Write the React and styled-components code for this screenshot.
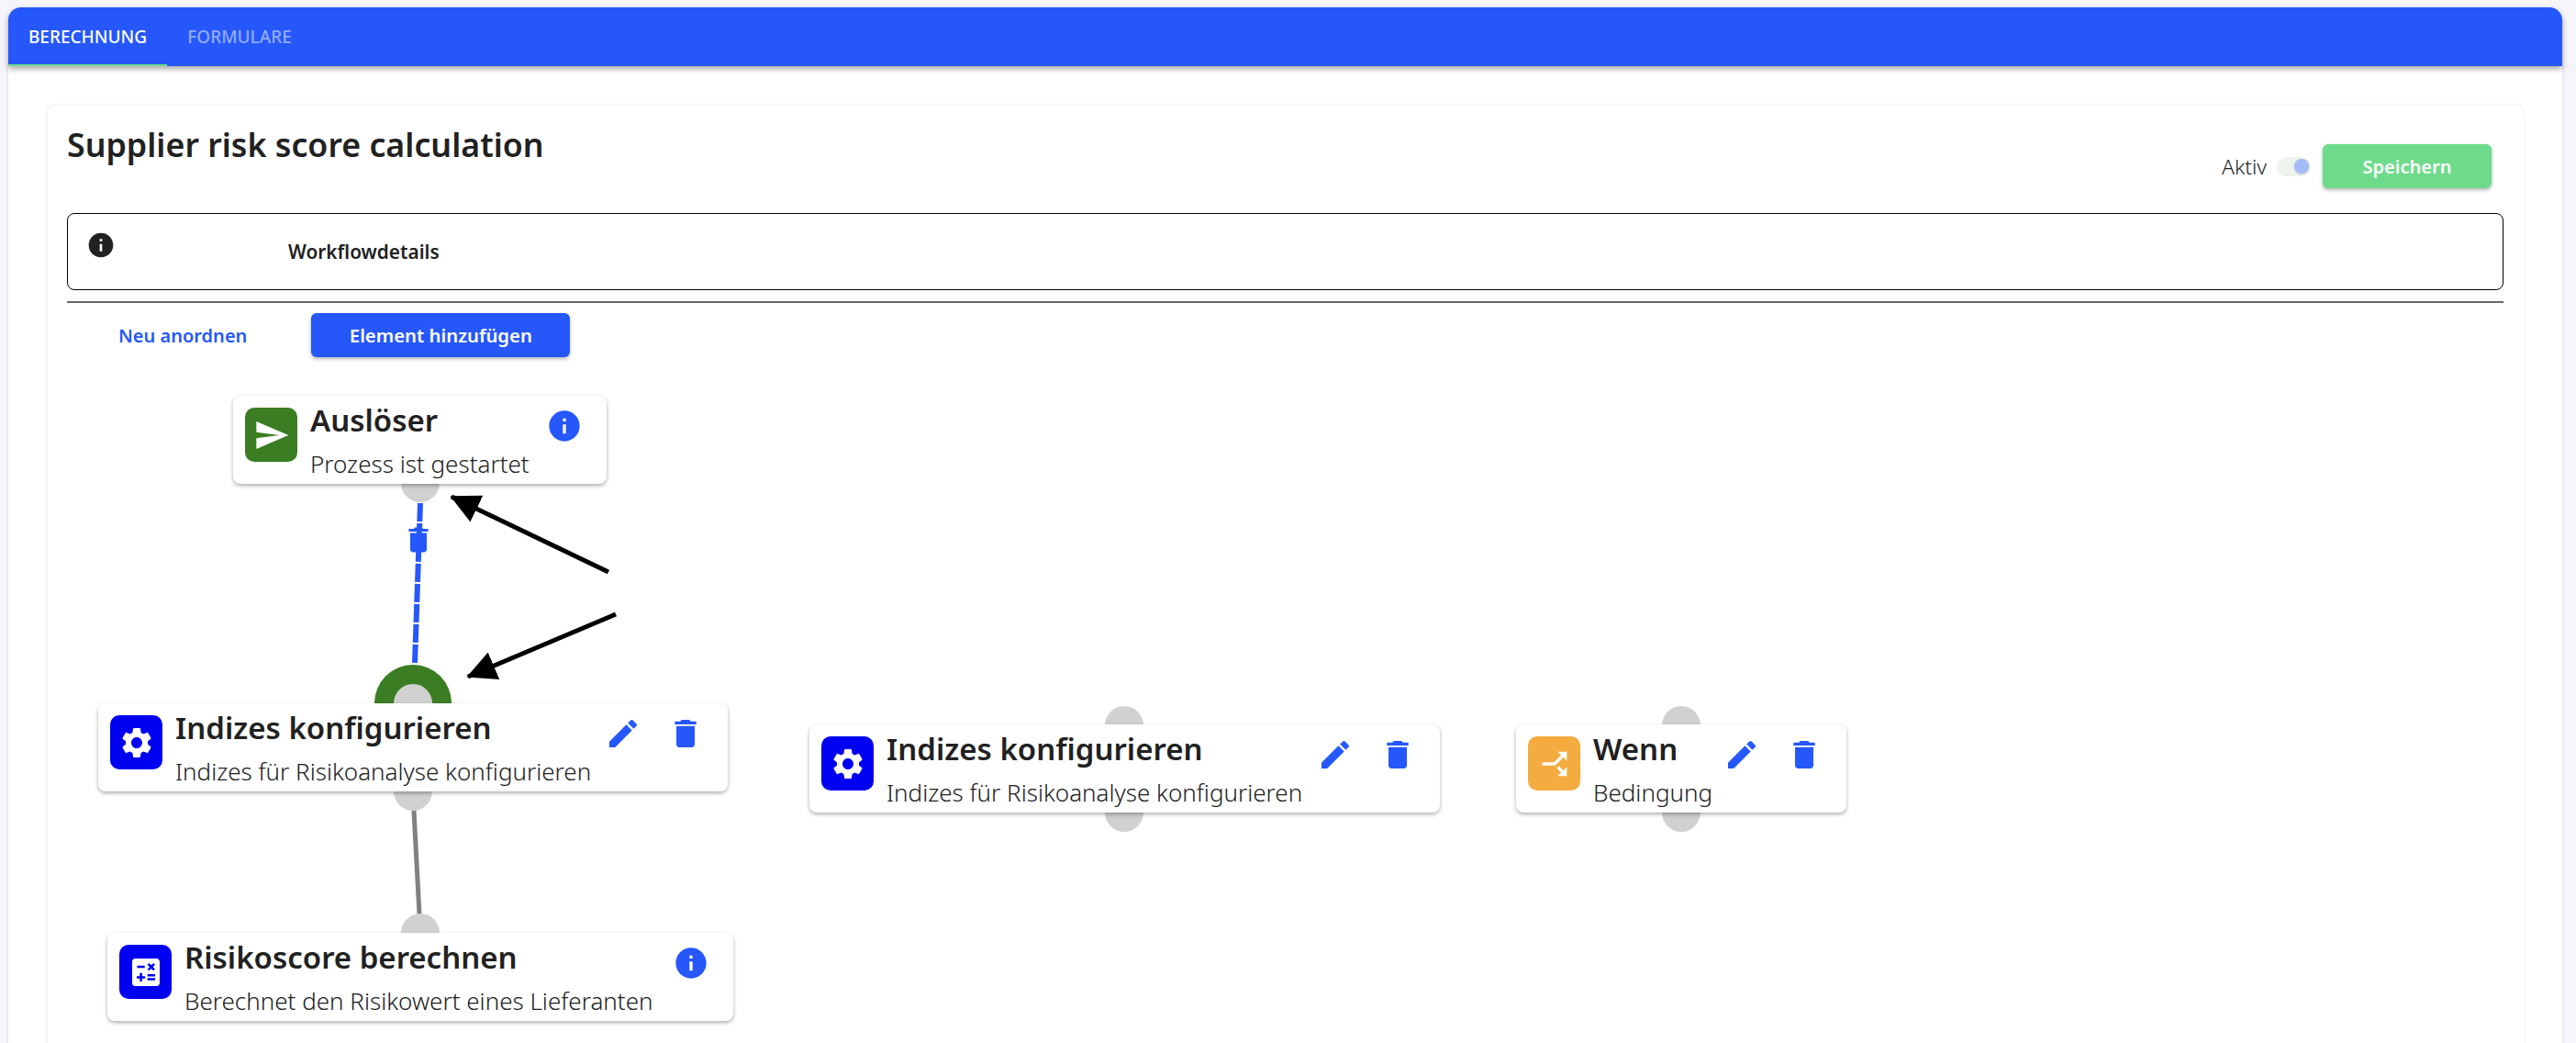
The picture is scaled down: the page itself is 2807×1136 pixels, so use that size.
import React from "react";
import styled, { createGlobalStyle } from "styled-components";

const BLUE = "#2557fa";

const GlobalStyle = createGlobalStyle`
  html, body {
    margin: 0;
    height: 100%;
    overflow: hidden;
    background: #f5f5fb;
    font-family: "Noto Sans", "Open Sans", sans-serif;
    color: #212121;
  }
`;

const Page = styled.div`
  padding: 8px 15px 0 9px;
  height: 1128px;
  display: flex;
  flex-direction: column;
`;

const TabBar = styled.header`
  display: flex;
  height: 64px;
  flex: none;
  background: ${BLUE};
  border-radius: 14px 14px 0 0;
  box-shadow: 0 3px 6px rgba(0, 0, 0, 0.35);
  position: relative;
  z-index: 2;
`;

const Tab = styled.div`
  display: flex;
  align-items: center;
  justify-content: center;
  width: ${(p) => p.$width}px;
  font-size: 19px;
  font-weight: 500;
  color: ${(p) => (p.$active ? "#fff" : "rgba(255, 255, 255, 0.5)")};
  border-bottom: 2px solid ${(p) => (p.$active ? "#6edb8a" : "transparent")};
  padding-top: 2px;
  box-sizing: border-box;
`;

const Sheet = styled.main`
  flex: 1;
  min-height: 0;
  background: #fff;
  box-shadow: 0 0 3px rgba(0, 0, 0, 0.18);
  padding: 43px 42px 0 43px;
  overflow: hidden;
`;

const Card = styled.section`
  height: 1100px;
  padding: 0 22px 0 21px;
  background: #fff;
  border-radius: 8px;
  box-shadow: 0 0 4px rgba(0, 0, 0, 0.1);
`;

const TitleRow = styled.div`
  display: flex;
  justify-content: space-between;
  align-items: flex-start;
  height: 117px;
`;

const Title = styled.h1`
  margin: 18px 0 0;
  font-size: 35.75px;
  line-height: 48px;
  font-weight: 600;
`;

const StatusGroup = styled.div`
  display: flex;
  align-items: center;
  margin: 42px 13px 0 0;
`;

const StatusLabel = styled.span`
  font-size: 22.8px;
  font-weight: 300;
  margin-right: 11px;
`;

const Toggle = styled.div`
  width: 37px;
  height: 21px;
  border-radius: 11px;
  background: #edf5ee;
  margin-right: 13px;
  display: flex;
  align-items: center;
  justify-content: flex-end;
  padding-right: 2px;
  box-sizing: border-box;
`;

const Thumb = styled.div`
  width: 16px;
  height: 16px;
  border-radius: 50%;
  background: #a6bbf9;
  box-shadow: 0 1px 2px rgba(0, 0, 0, 0.2);
`;

const Button = styled.button`
  font: inherit;
  border: 0;
  height: 48px;
  width: ${(p) => p.$width}px;
  border-radius: 6px;
  background: ${(p) => p.$bg};
  color: #fff;
  font-size: ${(p) => p.$size}px;
  font-weight: 600;
  box-shadow: 0 2px 4px rgba(0, 0, 0, 0.3);
`;

const DetailsBox = styled.div`
  display: flex;
  height: 84px;
  box-sizing: border-box;
  border: 1.5px solid #000;
  border-radius: 8px;
  padding: 0 0 0 20px;
`;

const DetailsIcon = styled.svg`
  width: 32px;
  height: 32px;
  margin-top: 18px;
  fill: #212121;
`;

const DetailsLabel = styled.div`
  margin: 1px 0 0 188px;
  line-height: 80px;
  font-size: 20.8px;
  font-weight: 600;
`;

const Divider = styled.hr`
  margin: 12px 0 0;
  border: 0;
  height: 2px;
  background: #666;
`;

const Toolbar = styled.div`
  display: flex;
  align-items: center;
  height: 48px;
  margin-top: 11px;
  padding-left: 56px;
`;

const LinkLabel = styled.span`
  color: ${BLUE};
  font-size: 20px;
  font-weight: 600;
  margin-right: 70px;
`;

const Canvas = styled.div`
  position: relative;
  height: 720px;
  margin-top: 11px;
`;

const Wires = styled.svg`
  position: absolute;
  left: 0;
  top: 0;
  width: 2655px;
  height: 720px;
  z-index: 1;
`;

const Handle = styled.div`
  position: absolute;
  left: ${(p) => p.$x - 21}px;
  top: ${(p) => p.$y - 21}px;
  width: 42px;
  height: 42px;
  border-radius: 50%;
  background: #d1d1d1;
  z-index: 2;
  ${(p) => p.$ring && "box-shadow: 0 0 0 21px #3a7d23;"}
`;

const Node = styled.article`
  position: absolute;
  left: ${(p) => p.$x}px;
  top: ${(p) => p.$y}px;
  width: ${(p) => p.$w}px;
  height: 96px;
  box-sizing: border-box;
  display: flex;
  padding: 13px 26px 0 13px;
  background: #fff;
  border-radius: 8px;
  box-shadow: 0 2px 4px rgba(0, 0, 0, 0.32);
  z-index: 3;
`;

const IconTile = styled.div`
  flex: none;
  width: 57px;
  height: 59px;
  border-radius: 10px;
  background: ${(p) => p.$bg};
  display: flex;
  align-items: center;
  justify-content: center;
  margin-right: 14px;
`;

const TileIcon = styled.svg`
  width: 40px;
  height: 40px;
  fill: #fff;
`;

const NodeText = styled.div`
  flex: 1;
  min-width: 0;
  margin-top: -8px;
`;

const NodeTitle = styled.div`
  font-size: 33px;
  line-height: 44px;
  font-weight: 600;
  white-space: nowrap;
`;

const NodeSub = styled.div`
  font-size: 26px;
  font-weight: 300;
  line-height: 34px;
  margin-top: 8px;
  white-space: nowrap;
`;

const Actions = styled.div`
  display: flex;
  gap: ${(p) => p.$gap}px;
`;

const ActionIcon = styled.svg`
  width: 40px;
  height: 40px;
  fill: ${BLUE};
`;

const INFO = "M12 2C6.48 2 2 6.48 2 12s4.48 10 10 10 10-4.48 10-10S17.52 2 12 2zm1 15h-2v-6h2v6zm0-8h-2V7h2v2z";
const DELETE = "M6 19c0 1.1.9 2 2 2h8c1.1 0 2-.9 2-2V7H6v12zM19 4h-3.5l-1-1h-5l-1 1H5v2h14V4z";
const EDIT = "M3 17.25V21h3.75L17.81 9.94l-3.75-3.75L3 17.25zM20.71 7.04c.39-.39.39-1.02 0-1.41l-2.34-2.34a.9959.9959 0 0 0-1.41 0l-1.83 1.83 3.75 3.75 1.83-1.83z";
const SEND = "M2.01 21L23 12 2.01 3 2 10l15 2-15 2z";
const SETTINGS = "M19.14 12.94c.04-.3.06-.61.06-.94 0-.32-.02-.64-.07-.94l2.03-1.58c.18-.14.23-.41.12-.61l-1.92-3.32c-.12-.22-.37-.29-.59-.22l-2.39.96c-.5-.38-1.03-.7-1.62-.94l-.36-2.54c-.04-.24-.24-.41-.48-.41h-3.84c-.24 0-.43.17-.47.41l-.36 2.54c-.59.24-1.13.57-1.62.94l-2.39-.96c-.22-.08-.47 0-.59.22L2.74 8.87c-.12.21-.08.47.12.61l2.03 1.58c-.05.3-.09.63-.09.94s.02.64.07.94l-2.03 1.58c-.18.14-.23.41-.12.61l1.92 3.32c.12.22.37.29.59.22l2.39-.96c.5.38 1.03.7 1.62.94l.36 2.54c.05.24.24.41.48.41h3.84c.24 0 .44-.17.47-.41l.36-2.54c.59-.24 1.13-.56 1.62-.94l2.39.96c.22.08.47 0 .59-.22l1.92-3.32c.12-.22.07-.47-.12-.61l-2.01-1.58zM12 15.6c-1.98 0-3.6-1.62-3.6-3.6s1.62-3.6 3.6-3.6 3.6 1.62 3.6 3.6-1.62 3.6-3.6 3.6z";
const CALC = "M19 3H5c-1.1 0-2 .9-2 2v14c0 1.1.9 2 2 2h14c1.1 0 2-.9 2-2V5c0-1.1-.9-2-2-2zm-5.97 4.06L14.09 6l1.41 1.41L16.91 6l1.06 1.06-1.41 1.41 1.41 1.41-1.06 1.06-1.41-1.4-1.41 1.41-1.06-1.06 1.41-1.41-1.41-1.42zm-6.78.66h5v1.5h-5v-1.5zM11.5 16h-2v2H8v-2H6v-1.5h2v-2h1.5v2h2V16zm6.5 1.25h-5v-1.5h5v1.5zm0-2.5h-5v-1.5h5v1.5z";
const SPLIT = "M14 4l2.29 2.29-2.88 2.88 1.42 1.42 2.88-2.88L20 10V4h-6zm-4 0H4v6l2.29-2.29 4.71 4.7V20h2v-8.41l-5.29-5.3L10 4z";

// canvas origin sits at x=73, y=400 of the page
const nodes = [
  { x: 181, y: 31, w: 407, bg: "#3a7d23", icon: SEND, title: "Auslöser", sub: "Prozess ist gestartet", kind: "info" },
  { x: 34, y: 366, w: 686, bg: "#0000f0", icon: SETTINGS, title: "Indizes konfigurieren", sub: "Indizes für Risikoanalyse konfigurieren", kind: "edit" },
  { x: 44, y: 616, w: 682, bg: "#0000f0", icon: CALC, title: "Risikoscore berechnen", sub: "Berechnet den Risikowert eines Lieferanten", kind: "info" },
  { x: 809, y: 389, w: 687, bg: "#0000f0", icon: SETTINGS, title: "Indizes konfigurieren", sub: "Indizes für Risikoanalyse konfigurieren", kind: "edit" },
  { x: 1579, y: 389, w: 360, bg: "#f4ab3f", icon: SPLIT, rotate: true, title: "Wenn", sub: "Bedingung", kind: "edit" },
];

const handles = [
  { x: 385, y: 126 },
  { x: 377, y: 366, ring: true },
  { x: 377, y: 462 },
  { x: 385, y: 616 },
  { x: 1152, y: 390 },
  { x: 1152, y: 485 },
  { x: 1759, y: 390 },
  { x: 1759, y: 485 },
];

const App = () => (
  <>
    <GlobalStyle />
    <Page>
      <TabBar>
        <Tab $active $width={173}>BERECHNUNG</Tab>
        <Tab $width={158}>FORMULARE</Tab>
      </TabBar>
      <Sheet>
        <Card>
          <TitleRow>
            <Title>Supplier risk score calculation</Title>
            <StatusGroup>
              <StatusLabel>Aktiv</StatusLabel>
              <Toggle><Thumb /></Toggle>
              <Button $bg="#6edb8a" $width={184} $size={20}>Speichern</Button>
            </StatusGroup>
          </TitleRow>
          <DetailsBox>
            <DetailsIcon viewBox="0 0 24 24"><path d={INFO} /></DetailsIcon>
            <DetailsLabel>Workflowdetails</DetailsLabel>
          </DetailsBox>
          <Divider />
          <Toolbar>
            <LinkLabel>Neu anordnen</LinkLabel>
            <Button $bg={BLUE} $width={282} $size={20.3}>Element hinzufügen</Button>
          </Toolbar>
          <Canvas>
            {handles.map((h, i) => (
              <Handle key={i} $x={h.x} $y={h.y} $ring={h.ring} />
            ))}
            <Wires viewBox="0 0 2655 720">
              <defs>
                <marker id="head" viewBox="0 0 10 10" refX="9.5" refY="5" markerWidth="6.4" markerHeight="6.4" orient="auto">
                  <path d="M0 0L10 5L0 10z" fill="#000" />
                </marker>
              </defs>
              <path d="M385 148L379 322" stroke={BLUE} strokeWidth="6" strokeDasharray="20 2" fill="none" />
              <path d="M378 483L384 596" stroke="#808080" strokeWidth="5" fill="none" />
              <path d="M374 327a5 5 0 0 1 8 0z" fill="#808080" />
              <path d="M590 223L419 141" stroke="#000" strokeWidth="5" markerEnd="url(#head)" />
              <path d="M598 269L437 337" stroke="#000" strokeWidth="5" markerEnd="url(#head)" />
              <svg x="365" y="170" width="36" height="36" viewBox="0 0 24 24">
                <path d={DELETE} fill={BLUE} />
              </svg>
            </Wires>
            {nodes.map((n) => (
              <Node key={n.x} $x={n.x} $y={n.y} $w={n.w}>
                <IconTile $bg={n.bg}>
                  <TileIcon viewBox="0 0 24 24">
                    <path d={n.icon} transform={n.rotate ? "rotate(90 12 12)" : undefined} />
                  </TileIcon>
                </IconTile>
                <NodeText>
                  <NodeTitle>{n.title}</NodeTitle>
                  <NodeSub>{n.sub}</NodeSub>
                </NodeText>
                {n.kind === "info" ? (
                  <Actions>
                    <ActionIcon viewBox="0 0 24 24"><path d={INFO} /></ActionIcon>
                  </Actions>
                ) : (
                  <Actions $gap={28}>
                    <ActionIcon viewBox="0 0 24 24"><path d={EDIT} /></ActionIcon>
                    <ActionIcon viewBox="0 0 24 24"><path d={DELETE} /></ActionIcon>
                  </Actions>
                )}
              </Node>
            ))}
          </Canvas>
        </Card>
      </Sheet>
    </Page>
  </>
);

export default App;
